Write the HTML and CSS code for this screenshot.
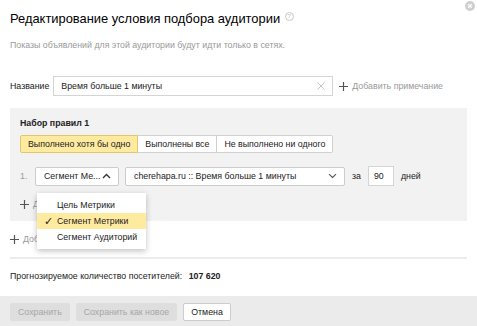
FILE: index.html
```html
<!DOCTYPE html>
<html lang="ru">
<head>
    <meta charset="UTF-8">
    <title>Редактирование условия подбора аудитории</title>
    <link rel="stylesheet" href="styles.css">
</head>
<body>

<div class="dialog">
    <button class="close" title="Закрыть">
        <svg width="10" height="10" viewBox="0 0 10 10"><circle cx="5" cy="5" r="5" fill="#cfcfcf"/><path d="M3.2 3.2l3.6 3.6M6.8 3.2l-3.6 3.6" stroke="#fff" stroke-width="1.3"/></svg>
    </button>

    <h1 class="title">Редактирование условия подбора аудитории <span class="help">?</span></h1>
    <p class="subtitle">Показы объявлений для этой аудитории будут идти только в сетях.</p>

    <div class="name-row">
        <label class="label">Название</label>
        <div class="input name-input">
            <span>Время больше 1 минуты</span>
            <svg class="clear" width="8" height="8" viewBox="0 0 8 8"><path d="M0.5 0.5l7 7M7.5 0.5l-7 7" stroke="#bdbdbd" stroke-width="0.9"/></svg>
        </div>
        <a class="add-link" href="#">
            <svg class="plus" width="9" height="9" viewBox="0 0 9 9"><path d="M4.5 0v9M0 4.5h9" stroke="#555" stroke-width="1.2"/></svg>
            Добавить примечание
        </a>
    </div>

    <div class="ruleset">
        <h2 class="ruleset-title">Набор правил 1</h2>
        <div class="seg">
            <button class="seg-btn active">Выполнено хотя бы одно</button>
            <button class="seg-btn">Выполнены все</button>
            <button class="seg-btn">Не выполнено ни одного</button>
        </div>

        <div class="cond-row">
            <span class="num">1.</span>
            <div class="select type-select">
                <span>Сегмент Ме...</span>
                <svg width="9" height="6" viewBox="0 0 9 6"><path d="M1 5l3.5-3.5L8 5" fill="none" stroke="#333" stroke-width="1.3"/></svg>
                <ul class="popup">
                    <li>Цель Метрики</li>
                    <li class="checked"><span class="check">✓</span>Сегмент Метрики</li>
                    <li>Сегмент Аудиторий</li>
                </ul>
            </div>
            <div class="select goal-select">
                <span>cherehapa.ru :: Время больше 1 минуты</span>
                <svg width="9" height="6" viewBox="0 0 9 6"><path d="M1 1.2l3.5 3.3L8 1.2" fill="none" stroke="#555" stroke-width="1.1"/></svg>
            </div>
            <span class="word">за</span>
            <div class="input days">90</div>
            <span class="word">дней</span>
        </div>

        <a class="add-link" href="#">
            <svg class="plus" width="9" height="9" viewBox="0 0 9 9"><path d="M4.5 0v9M0 4.5h9" stroke="#555" stroke-width="1.2"/></svg>
            Добавить условие
        </a>
    </div>

    <a class="add-link add-set" href="#">
        <svg class="plus" width="9" height="9" viewBox="0 0 9 9"><path d="M4.5 0v9M0 4.5h9" stroke="#555" stroke-width="1.2"/></svg>
        Добавить набор правил
    </a>

    <hr class="divider">

    <p class="forecast">Прогнозируемое количество посетителей: <b>107 620</b></p>
</div>

<footer class="footer">
    <button class="btn" disabled>Сохранить</button>
    <button class="btn" disabled>Сохранить как новое</button>
    <button class="btn btn-white">Отмена</button>
</footer>

</body>
</html>
```

FILE: styles.css
```css
body {
    margin: 0;
    font-family: "Liberation Sans", Arial, sans-serif;
    font-size: 8.8px;
    color: #222;
    background: #fff;
}

.dialog {
    position: relative;
    padding: 11px 10px 0 10px;
}

.close {
    position: absolute;
    top: 1px;
    right: 2px;
    border: none;
    background: none;
    padding: 0;
    line-height: 0;
}

.title {
    margin: 0;
    font-size: 12.9px;
    font-weight: normal;
    line-height: 16px;
    color: #000;
}

.help {
    display: inline-block;
    width: 7px;
    height: 7px;
    border: 1px solid #c8c8c8;
    border-radius: 50%;
    font-size: 6px;
    line-height: 7px;
    text-align: center;
    color: #c0c0c0;
    vertical-align: 5px;
    margin-left: 1px;
}

.subtitle {
    margin: 11px 0 0 0;
    line-height: 14px;
    color: #999;
}

.name-row {
    display: flex;
    align-items: center;
    margin-top: 24px;
}

.label {
    margin-right: 4px;
}

.input {
    box-sizing: border-box;
    height: 20px;
    border: 1px solid #d4d4d4;
    background: #fff;
    display: flex;
    align-items: center;
    padding: 0 7px;
}

.name-input {
    width: 280px;
    justify-content: space-between;
}

.name-row .add-link {
    margin-left: 6px;
}

.add-link {
    display: flex;
    align-items: center;
    color: #999;
    text-decoration: none;
    line-height: 12px;
}

.plus {
    margin-right: 4px;
}

.ruleset {
    background: #f2f2f2;
    margin-top: 12px;
    padding: 9px 10px 11px 10px;
}

.ruleset-title {
    margin: 0;
    font-size: 8.8px;
    line-height: 12px;
}

.seg {
    display: flex;
    margin-top: 6px;
}

.seg-btn {
    height: 18px;
    border: 1px solid #d0d0d0;
    border-left: none;
    background: #fff;
    font: inherit;
    color: #222;
    padding: 0 7px;
    border-radius: 0;
}

.seg-btn:first-child {
    border-left: 1px solid #d0d0d0;
    border-radius: 2px 0 0 2px;
}

.seg-btn:last-child {
    border-radius: 0 2px 2px 0;
}

.seg-btn.active {
    background: #ffeba0;
    border-color: #e0c770;
}

.cond-row {
    display: flex;
    align-items: center;
    margin-top: 13px;
}

.num {
    color: #999;
    width: 15px;
}

.select {
    position: relative;
    box-sizing: border-box;
    height: 19px;
    border: 1px solid #ccc;
    border-radius: 2px;
    background: #fff;
    display: flex;
    align-items: center;
    justify-content: space-between;
    padding: 0 7px 0 8px;
    white-space: nowrap;
}

.type-select {
    width: 84px;
}

.goal-select {
    width: 220px;
    margin-left: 6px;
}

.word {
    margin: 0 7px;
}

.days {
    width: 26px;
    height: 20px;
    padding: 0 5px;
}

.ruleset > .add-link {
    margin-top: 12px;
}

.popup {
    position: absolute;
    top: 25px;
    left: 1px;
    width: 109px;
    margin: 0;
    padding: 4px 0;
    list-style: none;
    background: #fff;
    box-shadow: 0 2px 6px rgba(0, 0, 0, 0.25);
    z-index: 10;
}

.popup li {
    line-height: 16px;
    padding-left: 20px;
    position: relative;
}

.popup li.checked {
    background: #ffeba0;
}

.check {
    position: absolute;
    left: 7px;
    font-size: 11px;
}

.add-set {
    margin-top: 12px;
}

.divider {
    border: none;
    height: 2px;
    background: #ececec;
    margin: 12px 0 0 0;
}

.forecast {
    margin: 11px 0 0 0;
    line-height: 12px;
}

.forecast b {
    margin-left: 4px;
}

.footer {
    margin-top: 14px;
    background: #ebebeb;
    padding: 7px 10px 6px 10px;
    display: flex;
    gap: 6px;
}

.btn {
    height: 18px;
    border: 1px solid transparent;
    border-radius: 2px;
    background: #dedede;
    color: #a6a6a6;
    font: inherit;
    padding: 0 7px;
}

.btn-white {
    background: #fff;
    border-color: #ccc;
    color: #222;
}
```
